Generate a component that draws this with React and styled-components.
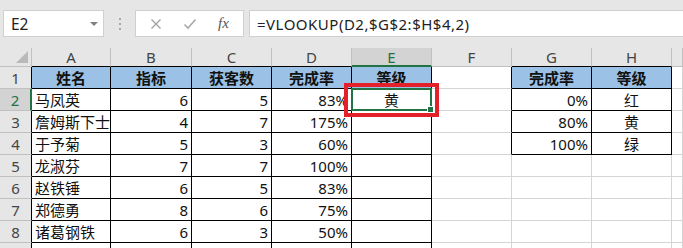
import React from 'react'
import styled, { createGlobalStyle } from 'styled-components'

const Global = createGlobalStyle`
  html, body {
    margin: 0;
    padding: 0;
    background: #fff;
    overflow: hidden;
  }
`

const GRID = '#d4d4d4'
const HEAD_LINE = '#c0c0c0'
const GREEN = '#217346'
const BLUE = '#9bc2e6'

const Page = styled.div`
  width: 683px;
  height: 248px;
  overflow: hidden;
  font-family: "Noto Sans", "Noto Sans CJK SC", sans-serif;
`

const Toolbar = styled.div`
  height: 48px;
  background: #e6e6e6;
  display: flex;
  align-items: flex-start;
  padding-top: 10px;
  box-sizing: border-box;
`

const NameBox = styled.div`
  margin-left: 3px;
  width: 101px;
  height: 27px;
  box-sizing: border-box;
  background: #fff;
  border: 1px solid #d0d0d0;
  display: flex;
  align-items: center;
  justify-content: space-between;
  padding: 0 5px 0 7px;
  font-size: 15.5px;
  color: #222;
`

const Caret = styled.span`
  width: 0;
  height: 0;
  border-left: 4px solid transparent;
  border-right: 4px solid transparent;
  border-top: 4px solid #808080;
`

const Grip = styled.div`
  width: 31px;
  height: 27px;
  display: flex;
  flex-direction: column;
  align-items: center;
  justify-content: center;
  gap: 3px;
  span {
    width: 2px;
    height: 2px;
    background: #a8a8a8;
  }
`

const FxBox = styled.div`
  width: 109px;
  height: 27px;
  box-sizing: border-box;
  background: #fff;
  border: 1px solid #d0d0d0;
  display: flex;
  align-items: center;
  padding-left: 14px;
  gap: 21px;
  color: #9a9a9a;
`

const FxLabel = styled.span`
  font-family: "Liberation Serif", serif;
  font-style: italic;
  font-size: 15px;
  color: #555;
`

const Formula = styled.div`
  flex: 1;
  margin-left: 5px;
  height: 27px;
  box-sizing: border-box;
  background: #fff;
  border: 1px solid #d0d0d0;
  border-right: none;
  display: flex;
  align-items: center;
  padding-left: 7px;
  font-size: 15px;
  letter-spacing: 0.5px;
  color: #222;
  white-space: nowrap;
`

const Sheet = styled.div`
  display: grid;
  grid-template-columns: 32px 79px 81px 80px 80px 80px 80px 80px 80px 11px;
  grid-auto-rows: 22px;
  grid-template-rows: 19px;
`

const Corner = styled.div`
  background: #e6e6e6;
  border-right: 1px solid ${HEAD_LINE};
  border-bottom: 1px solid ${HEAD_LINE};
  box-sizing: border-box;
  position: relative;
  &:after {
    content: '';
    position: absolute;
    right: 3px;
    bottom: 3px;
    border-left: 12px solid transparent;
    border-bottom: 12px solid #b9b9b9;
  }
`

const ColHead = styled.div`
  background: ${p => (p.$active ? '#d3d3d3' : '#e6e6e6')};
  box-sizing: border-box;
  border-right: 1px solid ${HEAD_LINE};
  border-bottom: ${p => (p.$active ? `2px solid ${GREEN}` : `1px solid ${p.$line}`)};
  color: ${p => (p.$active ? GREEN : '#444')};
  font-size: 15px;
  display: flex;
  align-items: center;
  justify-content: center;
  line-height: 1;
  padding-top: 1px;
  overflow: hidden;
`

const RowHead = styled.div`
  background: ${p => (p.$active ? '#d3d3d3' : '#e6e6e6')};
  box-sizing: border-box;
  border-right: ${p => (p.$active ? `2px solid ${GREEN}` : `1px solid ${p.$line}`)};
  border-bottom: 1px solid ${HEAD_LINE};
  color: ${p => (p.$active ? GREEN : '#444')};
  font-size: 15px;
  display: flex;
  align-items: center;
  justify-content: center;
`

const Cell = styled.div`
  position: relative;
  box-sizing: border-box;
  background: ${p => p.$fill || '#fff'};
  border-right: 1px solid ${p => p.$br};
  border-bottom: 1px solid ${p => p.$bb};
  display: flex;
  align-items: center;
  justify-content: ${p => p.$align};
  padding: 0 3px;
  font-size: 15px;
  font-weight: ${p => (p.$bold ? 700 : 400)};
  color: #111;
  white-space: nowrap;
  font-family: ${p => (p.$num ? '"Noto Sans", sans-serif' : '"Noto Sans CJK SC", sans-serif')};
`

const Selection = styled.div`
  position: absolute;
  z-index: 1;
  left: -1px;
  top: -1px;
  right: -1px;
  bottom: -1px;
  border: 2px solid ${GREEN};
  &:after {
    content: '';
    position: absolute;
    right: -4px;
    bottom: -4px;
    width: 5px;
    height: 5px;
    background: ${GREEN};
    border: 1px solid #fff;
  }
`

const Callout = styled.div`
  position: absolute;
  z-index: 2;
  left: -8px;
  top: -6px;
  width: 95px;
  height: 34px;
  box-sizing: border-box;
  border: 4px solid #e3212b;
  pointer-events: none;
`

const letters = ['A', 'B', 'C', 'D', 'E', 'F', 'G', 'H', '']

const rows = [
  ['姓名', '指标', '获客数', '完成率', '等级', '', '完成率', '等级'],
  ['马凤英', '6', '5', '83%', '黄', '', '0%', '红'],
  ['詹姆斯下士', '4', '7', '175%', '', '', '80%', '黄'],
  ['于予菊', '5', '3', '60%', '', '', '100%', '绿'],
  ['龙淑芬', '7', '7', '100%'],
  ['赵铁锤', '6', '5', '83%'],
  ['郑德勇', '8', '6', '75%'],
  ['诸葛钢铁', '6', '3', '50%'],
  [],
]

const inTable = (r, c) =>
  (r >= 1 && r <= 9 && c >= 0 && c <= 4) || (r >= 1 && r <= 4 && c >= 6 && c <= 7)

const isNum = v => /^[0-9%]+$/.test(v)

const App = () => {
  return (
    <Page>
      <Global />
      <Toolbar>
        <NameBox>
          E2
          <Caret />
        </NameBox>
        <Grip>
          <span />
          <span />
          <span />
        </Grip>
        <FxBox>
          <svg width="12" height="12" viewBox="0 0 12 12">
            <path d="M1.5 1.5 L10.5 10.5 M10.5 1.5 L1.5 10.5" stroke="#a0a0a0" strokeWidth="1.3" fill="none" />
          </svg>
          <svg width="14" height="12" viewBox="0 0 14 12">
            <path d="M1.5 6.5 L5 10 L12.5 1.5" stroke="#a8a8a8" strokeWidth="1.6" fill="none" />
          </svg>
          <FxLabel>fx</FxLabel>
        </FxBox>
        <Formula>=VLOOKUP(D2,$G$2:$H$4,2)</Formula>
      </Toolbar>
      <Sheet>
        <Corner />
        {letters.map((l, c) => (
          <ColHead key={c} $active={l === 'E'} $line={inTable(1, c) ? '#000' : HEAD_LINE}>
            {l}
          </ColHead>
        ))}
        {rows.map((row, i) => {
          const r = i + 1
          return (
            <React.Fragment key={r}>
              <RowHead $active={r === 2} $line={inTable(r, 0) ? '#000' : HEAD_LINE}>
                {r < 9 ? r : ''}
              </RowHead>
              {letters.map((l, c) => {
                const v = row[c] || ''
                const header = r === 1 && inTable(r, c)
                const centered = header || c === 4 || c === 7
                const br = inTable(r, c) || inTable(r, c + 1) ? '#000' : GRID
                const bb = inTable(r, c) || inTable(r + 1, c) ? '#000' : GRID
                return (
                  <Cell
                    key={c}
                    $fill={header ? BLUE : null}
                    $bold={header}
                    $num={isNum(v)}
                    $align={centered ? 'center' : isNum(v) ? 'flex-end' : 'flex-start'}
                    $br={br}
                    $bb={bb}
                  >
                    {v}
                    {r === 2 && l === 'E' && (
                      <>
                        <Selection />
                        <Callout />
                      </>
                    )}
                  </Cell>
                )
              })}
            </React.Fragment>
          )
        })}
      </Sheet>
    </Page>
  )
}

export default App
